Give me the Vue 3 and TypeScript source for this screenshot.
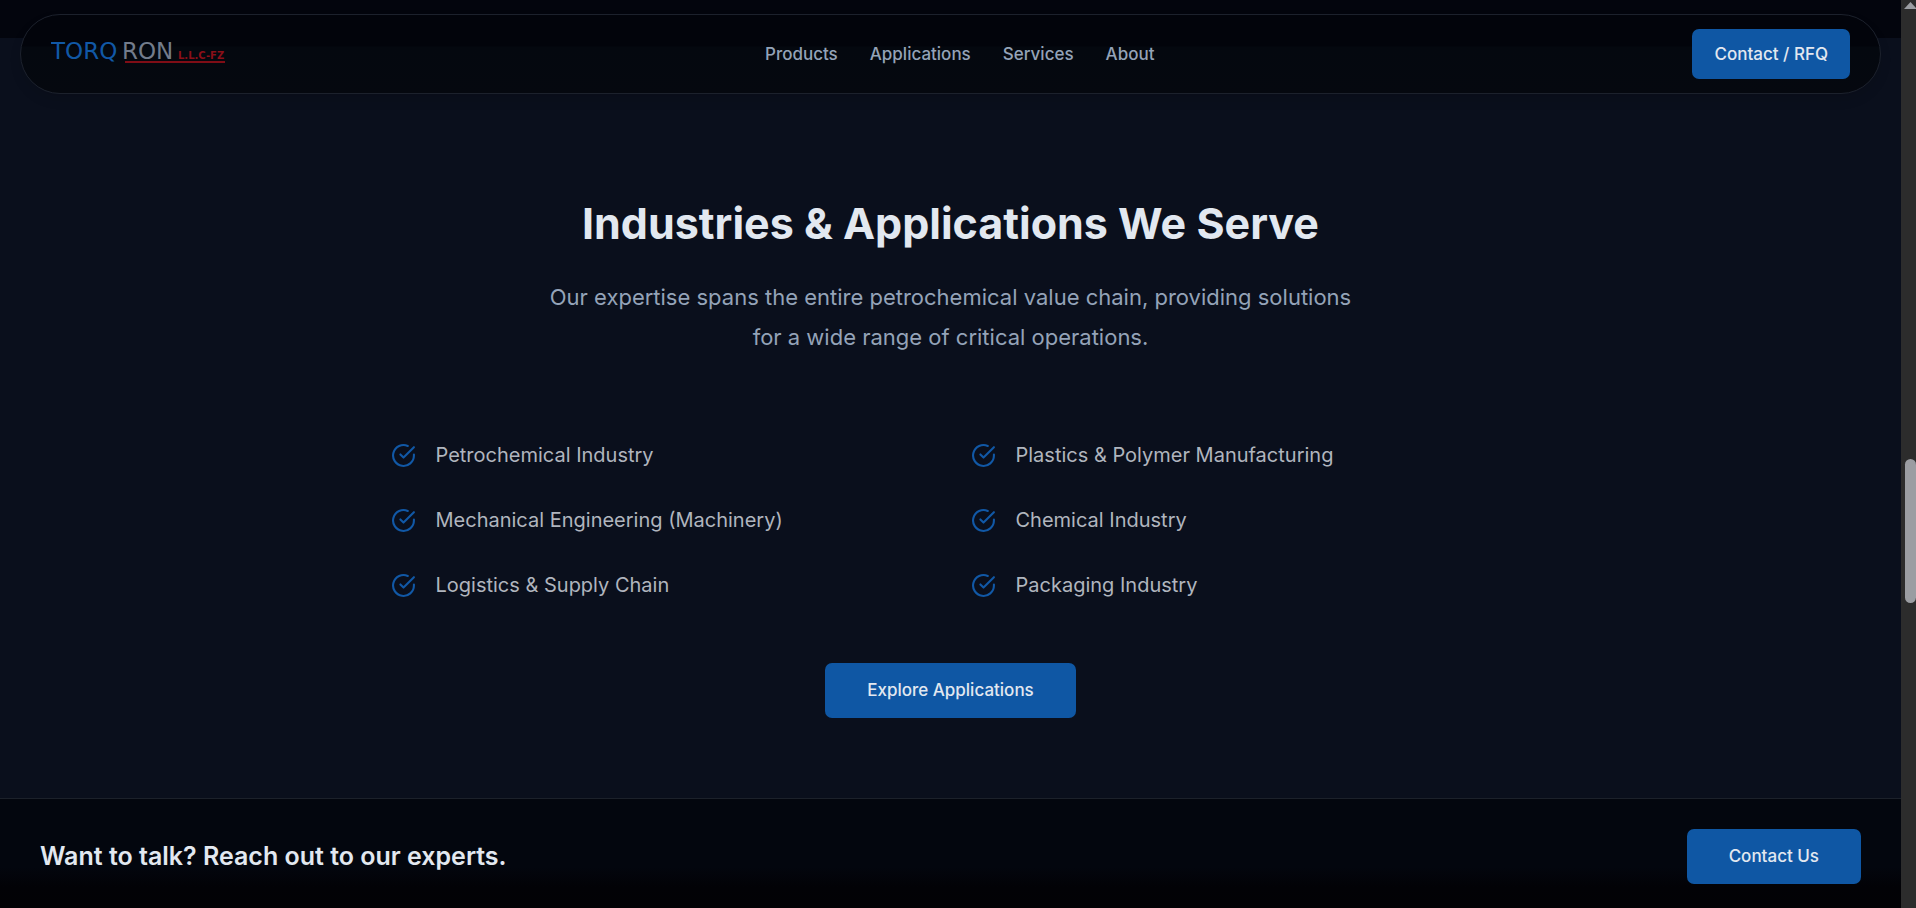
<script setup lang="ts">
interface NavLink {
  label: string
  href: string
}

const links: NavLink[] = [
  { label: 'Products', href: '#products' },
  { label: 'Applications', href: '#applications' },
  { label: 'Services', href: '#services' },
  { label: 'About', href: '#about' },
]

const industries: string[] = [
  'Petrochemical Industry',
  'Plastics & Polymer Manufacturing',
  'Mechanical Engineering (Machinery)',
  'Chemical Industry',
  'Logistics & Supply Chain',
  'Packaging Industry',
]
</script>

<template>
  <div class="shell">
    <div class="page">
      <header class="topbar">
        <a class="logo" href="#home">
          <svg width="176" height="40" viewBox="0 0 176 40">
            <text class="mark blue" x="0" y="25">TORQ</text>
            <text class="mark grey" x="71" y="25">RON</text>
            <text class="suffix" x="127" y="25">L.L.C-FZ</text>
            <rect x="74" y="27" width="100" height="2" fill="#7f0d16" />
          </svg>
        </a>
        <nav class="nav" aria-label="Main">
          <a v-for="link in links" :key="link.label" :href="link.href">{{ link.label }}</a>
        </nav>
        <button type="button" class="btn compact">Contact / RFQ</button>
      </header>

      <div class="previous"></div>

      <main class="section">
        <h2>Industries &amp; Applications We Serve</h2>
        <p class="lead">
          Our expertise spans the entire petrochemical value chain, providing solutions for a wide
          range of critical operations.
        </p>
        <ul class="industries">
          <li v-for="name in industries" :key="name">
            <svg
              width="25"
              height="25"
              viewBox="0 0 24 24"
              fill="none"
              stroke="#1158a6"
              stroke-width="2"
              stroke-linecap="round"
              stroke-linejoin="round"
              aria-hidden="true"
            >
              <path d="M22 11.08V12a10 10 0 1 1-5.93-9.14" />
              <path d="m9 11 3 3L22 4" />
            </svg>
            <span>{{ name }}</span>
          </li>
        </ul>
        <button type="button" class="btn">Explore Applications</button>
      </main>

      <section class="cta">
        <h3>Want to talk? Reach out to our experts.</h3>
        <button type="button" class="btn">Contact Us</button>
      </section>
    </div>

    <div class="scrollbar" aria-hidden="true">
      <svg width="15" height="12" viewBox="0 0 15 12">
        <path d="M3 9 9.500 2 16 9Z" fill="#9b9da2" />
      </svg>
      <div class="thumb"></div>
    </div>
  </div>
</template>

<style>
body {
  margin: 0;
  background: #0a0f1c;
}
</style>

<style scoped>
.shell {
  display: grid;
  grid-template-columns: minmax(0, 1fr) 15px;
  height: 100vh;
  overflow: hidden;
  font-family: Inter, "Liberation Sans", sans-serif;
  color: #e2e8f0;
}

.page {
  position: relative;
  display: flex;
  flex-direction: column;
  background: #0a0f1c;
}

.topbar {
  position: absolute;
  top: 14px;
  left: 20px;
  right: 20px;
  box-sizing: border-box;
  display: flex;
  align-items: center;
  justify-content: space-between;
  padding: 14px 30px;
  border: 1px solid #1c212c;
  border-radius: 40px;
  background: linear-gradient(#02040b 0, #02040b 31px, #04080f 32px, #05080f 100%);
  box-shadow: 0 6px 12px rgba(0, 0, 0, 0.1);
}

.logo,
.logo svg {
  display: block;
}

.mark {
  font: 23px "DejaVu Sans", sans-serif;
}

.blue {
  fill: #1158a6;
}

.grey {
  fill: #737c8b;
}

.suffix {
  font: bold 10px "DejaVu Sans", sans-serif;
  fill: #8b0f18;
}

.nav {
  display: flex;
  gap: 32px;
}

.nav a {
  color: #94a3b8;
  font-size: 17px;
  font-weight: 500;
  line-height: 25px;
  text-decoration: none;
}

.btn {
  padding: 15px 42px;
  border: 0;
  border-radius: 7px;
  background: #0f57a4;
  color: #e2e8f0;
  font-family: inherit;
  font-size: 17px;
  font-weight: 500;
  line-height: 25px;
  cursor: pointer;
}

.compact {
  padding: 12px 22px;
  line-height: 26px;
}

.previous {
  height: 38px;
  background: #03050d;
}

.section {
  display: flex;
  flex-direction: column;
  align-items: center;
  padding: 160px 20px 80px;
}

h2 {
  margin: 0;
  font-size: 43px;
  font-weight: 700;
  line-height: 50px;
}

.lead {
  max-width: 820px;
  margin: 29px 0 0;
  color: #94a3b8;
  font-size: 22px;
  line-height: 40px;
  text-align: center;
}

.industries {
  box-sizing: border-box;
  display: grid;
  grid-template-columns: 1fr 1fr;
  gap: 35px 40px;
  width: 100%;
  max-width: 1120px;
  margin: 83px 0 63px;
  padding: 0;
  list-style: none;
}

.industries li {
  display: flex;
  align-items: center;
  gap: 20px;
  color: #b0b5be;
  font-size: 20px;
  line-height: 30px;
}

.cta {
  flex: 1;
  display: flex;
  align-items: center;
  justify-content: space-between;
  padding: 30px 40px 24px;
  border-top: 1px solid #1c212a;
  background: linear-gradient(#03060e 0, #03060e 68px, #020206 88px, #020205 100%);
}

h3 {
  margin: 0;
  font-size: 25px;
  font-weight: 600;
  line-height: 35px;
}

.scrollbar {
  display: flex;
  flex-direction: column;
  background: #2c2c2c;
}

.thumb {
  align-self: flex-end;
  width: 11px;
  height: 144px;
  margin-top: 447px;
  border-radius: 6px;
  background: #9b9da2;
}
</style>
